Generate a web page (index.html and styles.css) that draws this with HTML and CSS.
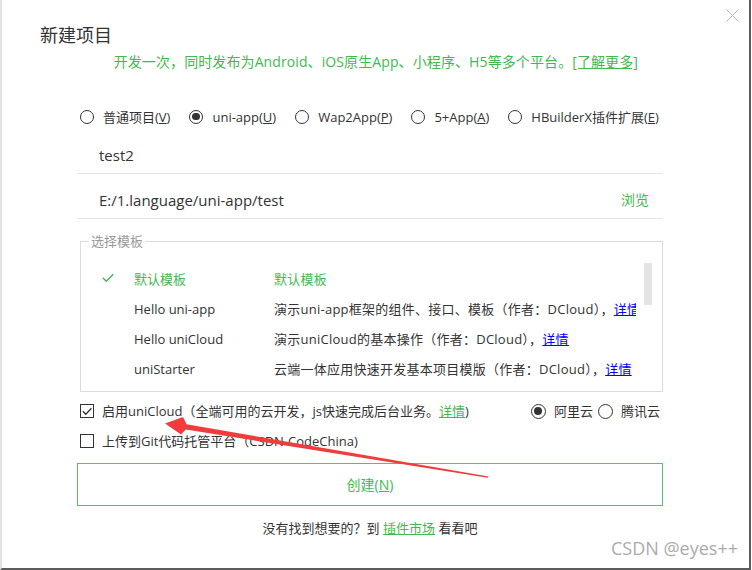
FILE: index.html
```html
<!DOCTYPE html>
<html lang="zh-CN">
<head>
<meta charset="utf-8">
<title>新建项目</title>
<link rel="stylesheet" href="styles.css">
</head>
<body>
<div class="window">
  <div class="header">
    <h1 class="title">新建项目</h1>
    <span class="close" aria-label="关闭">
      <svg width="13" height="13" viewBox="0 0 13 13"><path d="M0.5 0.5 L12.5 12.5 M12.5 0.5 L0.5 12.5" stroke="#b4b4b4" stroke-width="1" fill="none"/></svg>
    </span>
  </div>
  <div class="content">
    <p class="subtitle">开发一次，同时发布为Android、iOS原生App、小程序、H5等多个平台。<a class="green-link">[了解更多]</a></p>

    <div class="types">
      <label class="opt"><span class="radio"></span>普通项目(<u>V</u>)</label>
      <label class="opt"><span class="radio on"></span>uni-app(<u>U</u>)</label>
      <label class="opt"><span class="radio"></span>Wap2App(<u>P</u>)</label>
      <label class="opt"><span class="radio"></span>5+App(<u>A</u>)</label>
      <label class="opt"><span class="radio"></span>HBuilderX插件扩展(<u>E</u>)</label>
    </div>

    <div class="field"><span class="value">test2</span></div>
    <div class="field"><span class="value">E:/1.language/uni-app/test</span><a class="browse">浏览</a></div>

    <fieldset class="templates">
      <legend>选择模板</legend>
      <div class="tpl-wrap">
        <div class="tpl-list">
          <div class="tpl-row selected">
            <span class="tpl-check"><svg width="12" height="10" viewBox="0 0 12 10"><path d="M0.8 4.8 L4.3 8.3 L11.2 1.2" stroke="#3fb950" stroke-width="1.4" fill="none"/></svg></span>
            <span class="tpl-name">默认模板</span>
            <span class="tpl-desc">默认模板</span>
          </div>
          <div class="tpl-row">
            <span class="tpl-check"></span>
            <span class="tpl-name">Hello uni-app</span>
            <span class="tpl-desc">演示uni-app框架的组件、接口、模板（作者：DCloud），<a class="blue-link">详情</a></span>
          </div>
          <div class="tpl-row">
            <span class="tpl-check"></span>
            <span class="tpl-name">Hello uniCloud</span>
            <span class="tpl-desc">演示uniCloud的基本操作（作者：DCloud），<a class="blue-link">详情</a></span>
          </div>
          <div class="tpl-row">
            <span class="tpl-check"></span>
            <span class="tpl-name">uniStarter</span>
            <span class="tpl-desc">云端一体应用快速开发基本项目模版（作者：DCloud），<a class="blue-link">详情</a></span>
          </div>
        </div>
        <div class="scroll"><div class="thumb"></div></div>
      </div>
    </fieldset>

    <div class="opt-row">
      <label class="check-opt">
        <span class="checkbox"><svg width="14" height="14" viewBox="0 0 14 14"><path d="M2.8 7.2 L5.8 10.2 L11.4 4.2" stroke="#333" stroke-width="1.3" fill="none"/></svg></span>
        <span>启用uniCloud</span><span class="note">（全端可用的云开发，js快速完成后台业务。<a class="green-link">详情</a>)</span>
      </label>
      <div class="cloud">
        <label class="opt cloud-opt"><span class="radio on"></span>阿里云</label>
        <label class="opt cloud-opt"><span class="radio"></span>腾讯云</label>
      </div>
    </div>
    <div class="opt-row second">
      <label class="check-opt">
        <span class="checkbox"></span>
        <span>上传到Git代码托管平台（CSDN-CodeChina)</span>
      </label>
    </div>

    <button class="create">创建(<u>N</u>)</button>
    <p class="footer">没有找到想要的？到 <a class="green-link">插件市场</a> 看看吧</p>
  </div>
  <div class="watermark">CSDN @eyes++</div>
</div>
<svg class="arrow" width="752" height="570" viewBox="0 0 752 570">
  <polygon points="165,423.5 183,417 186.5,424.3 488.5,476.6 487.8,477.8 185.8,429.6 181,434.5" fill="#f03c3c"/>
</svg>
</body>
</html>
```

FILE: styles.css
```css
html, body {
  margin: 0;
  padding: 0;
  background: #ffffff;
}

body {
  font-family: "Open Sans", "Noto Sans CJK SC", sans-serif;
  color: #333333;
}

.window {
  position: relative;
  width: 751px;
  height: 570px;
  box-sizing: border-box;
  border-left: 2px solid #e3e3e3;
  border-right: 2px solid #5c5c5c;
  border-bottom: 2px solid #5c5c5c;
  background: #ffffff;
}

.header {
  display: flex;
  justify-content: space-between;
  align-items: flex-start;
  height: 47px;
}

.title {
  margin: 23px 0 0 38px;
  font-size: 18px;
  line-height: 24px;
  font-weight: normal;
  color: #333333;
}

.close {
  display: block;
  width: 13px;
  height: 13px;
  margin: 9px 10px 0 0;
}

.close svg {
  display: block;
}

.content {
  margin-left: 75px;
  width: 586px;
}

.subtitle {
  margin: 5px 0 0;
  padding-right: 25px;
  text-align: right;
  font-size: 14px;
  line-height: 20px;
  letter-spacing: 0.1px;
  color: #3fb950;
  white-space: nowrap;
}

.green-link {
  color: #3fb950;
  text-decoration: underline;
}

.blue-link {
  color: #0000ff;
  text-decoration: underline;
}

.types {
  display: flex;
  gap: 19px;
  margin-top: 35px;
  padding-left: 3px;
  font-size: 13px;
  line-height: 20px;
  white-space: nowrap;
}

.opt {
  display: flex;
  align-items: center;
  flex-shrink: 0;
}

.opt u {
  text-decoration: underline;
}

.radio {
  position: relative;
  display: inline-block;
  width: 14px;
  height: 14px;
  box-sizing: border-box;
  border: 1.3px solid #333333;
  border-radius: 50%;
  margin-right: 9px;
  flex-shrink: 0;
}

.radio.on::after {
  content: "";
  position: absolute;
  left: 2px;
  top: 2px;
  width: 7.4px;
  height: 7.4px;
  border-radius: 50%;
  background: #333333;
}

.field {
  display: flex;
  align-items: flex-start;
  margin-top: 2px;
  padding: 16px 14px 8px 22px;
  border-bottom: 1px solid #e3e3e3;
  font-size: 15px;
  line-height: 20px;
}

.field + .field {
  margin-top: 0;
}

.browse {
  margin-left: auto;
  font-size: 14px;
  color: #3fb950;
}

.templates {
  margin: 14px 0 0 3px;
  padding: 15px 0 7px 0;
  border: 1px solid #dcdcdc;
  min-width: 0;
}

.templates legend {
  margin-left: 8px;
  padding: 0 2px;
  font-size: 13px;
  line-height: 16px;
  color: #999999;
}

.tpl-wrap {
  display: flex;
  align-items: flex-start;
}

.tpl-list {
  width: 555px;
  overflow: hidden;
  flex-shrink: 0;
}

.tpl-row {
  display: flex;
  height: 30px;
  line-height: 30px;
  font-size: 13px;
  white-space: nowrap;
}

.tpl-row.selected {
  color: #3fb950;
}

.tpl-check {
  width: 32px;
  padding-left: 21px;
  flex-shrink: 0;
  display: flex;
  align-items: center;
}

.tpl-check svg {
  display: block;
  margin-top: -2px;
}

.tpl-name {
  width: 140px;
  flex-shrink: 0;
}

.tpl-desc {
  flex-shrink: 0;
  letter-spacing: 0.25px;
}

.scroll {
  width: 26px;
  flex-shrink: 0;
}

.thumb {
  width: 8px;
  height: 42px;
  margin: -1px 0 0 8px;
  background: #e4e4e4;
}

.opt-row {
  display: flex;
  justify-content: space-between;
  align-items: center;
  height: 20px;
  margin-top: 9px;
  padding: 0 3px;
  font-size: 13px;
  line-height: 20px;
  white-space: nowrap;
}

.opt-row.second {
  margin-top: 10px;
}

.check-opt {
  display: flex;
  align-items: center;
}

.checkbox {
  display: block;
  width: 14px;
  height: 14px;
  box-sizing: border-box;
  border: 1.3px solid #333333;
  margin-right: 8px;
  flex-shrink: 0;
}

.checkbox svg {
  display: block;
  margin: -1.3px 0 0 -1.3px;
}

.cloud {
  display: flex;
  align-items: center;
  gap: 5px;
}

.cloud-opt .radio {
  width: 15px;
  height: 15px;
  margin-right: 8px;
}

.cloud-opt .radio.on::after {
  left: 2.2px;
  top: 2.2px;
  width: 8px;
  height: 8px;
}

.create {
  display: block;
  width: 586px;
  height: 43px;
  margin-top: 12px;
  padding: 0;
  border: 1px solid #58c067;
  background: #ffffff;
  color: #3fb950;
  font-family: "Open Sans", "Noto Sans CJK SC", sans-serif;
  font-size: 14px;
  line-height: 20px;
}

.create u {
  text-decoration: underline;
}

.footer {
  margin: 12px 0 0;
  text-align: center;
  font-size: 13px;
  line-height: 20px;
  color: #333333;
}

.watermark {
  position: absolute;
  right: 11px;
  top: 536px;
  font-size: 18px;
  line-height: 24px;
  color: #ababab;
  white-space: nowrap;
}

.arrow {
  position: absolute;
  left: 0;
  top: 0;
  pointer-events: none;
}
```
